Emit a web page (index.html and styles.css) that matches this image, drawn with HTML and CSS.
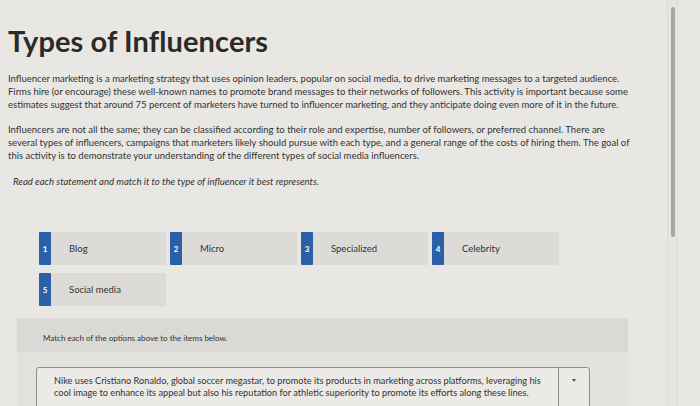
FILE: index.html
```html
<!DOCTYPE html>
<html>
<head>
<meta charset="utf-8">
<link rel="stylesheet" href="styles.css">
</head>
<body>
<div class="page">
  <main class="main">
    <h1 class="title">Types of Influencers</h1>
    <p class="para">Influencer marketing is a marketing strategy that uses opinion leaders, popular on social media, to drive marketing messages to a targeted audience.<br>Firms hire (or encourage) these well-known names to promote brand messages to their networks of followers. This activity is important because some estimates suggest that around 75 percent of marketers have turned to influencer marketing, and they anticipate doing even more of it in the future.</p>
    <p class="para">Influencers are not all the same; they can be classified according to their role and expertise, number of followers, or preferred channel. There are<br>several types of influencers, campaigns that marketers likely should pursue with each type, and a general range of the costs of hiring them. The goal of this activity is to demonstrate your understanding of the different types of social media influencers.</p>
    <p class="instr">Read each statement and match it to the type of influencer it best represents.</p>

    <div class="cards">
      <div class="card"><span class="badge">1</span><span class="label">Blog</span></div>
      <div class="card"><span class="badge">2</span><span class="label">Micro</span></div>
      <div class="card"><span class="badge">3</span><span class="label">Specialized</span></div>
      <div class="card"><span class="badge">4</span><span class="label">Celebrity</span></div>
      <div class="card"><span class="badge">5</span><span class="label">Social media</span></div>
    </div>

    <section class="match">
      <div class="match-head">Match each of the options above to the items below.</div>
      <div class="match-body">
        <div class="item">
          <div class="item-text">Nike uses Cristiano Ronaldo, global soccer megastar, to promote its products in marketing across platforms, leveraging his cool image to enhance its appeal but also his reputation for athletic superiority to promote its efforts along these lines.</div>
          <div class="item-select"><span class="caret"></span></div>
        </div>
      </div>
    </section>
  </main>
  <div class="scroll"><div class="thumb"></div></div>
</div>
</body>
</html>
```
FILE: styles.css
```css
html, body {
  margin: 0;
  padding: 0;
  background: #e8e7e3;
  height: 406px;
  overflow: hidden;
}
body {
  font-family: "Lato", "Open Sans", sans-serif;
  color: #333;
}
.page {
  display: flex;
  height: 406px;
}
.main {
  width: 660px;
  padding: 0 0 0 8px;
  box-sizing: border-box;
}
.title {
  margin: 24px 0 0 0;
  font-size: 29px;
  font-weight: 700;
  color: #2a2a2a;
  line-height: 34px;
  letter-spacing: 0.1px;
}
.para {
  margin: 14px 0 0 0;
  width: 634px;
  font-size: 9.5px;
  line-height: 13px;
  color: #333;
}
.para + .para {
  margin-top: 12px;
}
.instr {
  margin: 13px 0 0 5px;
  font-size: 9.6px;
  line-height: 13px;
  font-style: italic;
  color: #333;
}
.cards {
  display: grid;
  grid-template-columns: repeat(4, 127px);
  column-gap: 4px;
  row-gap: 8px;
  margin: 44px 0 0 31px;
}
.card {
  display: flex;
  align-items: center;
  height: 33px;
  background: #dcdbd7;
}
.badge {
  align-self: stretch;
  width: 12px;
  background: #2b5fa8;
  color: #fff;
  font-size: 8px;
  font-weight: 700;
  display: flex;
  align-items: center;
  justify-content: center;
  border-radius: 1px;
}
.label {
  margin-left: 18px;
  font-size: 9.5px;
  color: #333;
}
.match {
  margin: 12px 0 0 9px;
  width: 611px;
}
.match-head {
  background: #dad9d5;
  height: 34px;
  display: flex;
  align-items: center;
  padding: 6px 0 0 26px;
  box-sizing: border-box;
  font-size: 8px;
  color: #333;
}
.match-body {
  background: #e3e2de;
  padding: 15px 38px 20px 19px;
}
.item {
  display: flex;
  border: 1px solid #8e8e8c;
  border-radius: 3px;
  background: #ebeae6;
  min-height: 40px;
}
.item-text {
  flex: 1;
  padding: 7px 14px 6px 17px;
  font-size: 9.2px;
  line-height: 12px;
  color: #333;
}
.item-select {
  width: 30px;
  border-left: 1px solid #8e8e8c;
  display: flex;
  justify-content: center;
  padding-top: 11px;
}
.caret {
  width: 0;
  height: 0;
  border-left: 2.5px solid transparent;
  border-right: 2.5px solid transparent;
  border-top: 3px solid #555;
}
.scroll {
  width: 9px;
  margin-left: 7px;
  border-left: 1px solid #dcdbd7;
  border-right: 1px solid #dcdbd7;
  background: #e6e5e1;
  padding-top: 7px;
  display: flex;
  justify-content: center;
}
.thumb {
  width: 4px;
  height: 230px;
  background: #a6a6a4;
  border-radius: 2px;
}
```
